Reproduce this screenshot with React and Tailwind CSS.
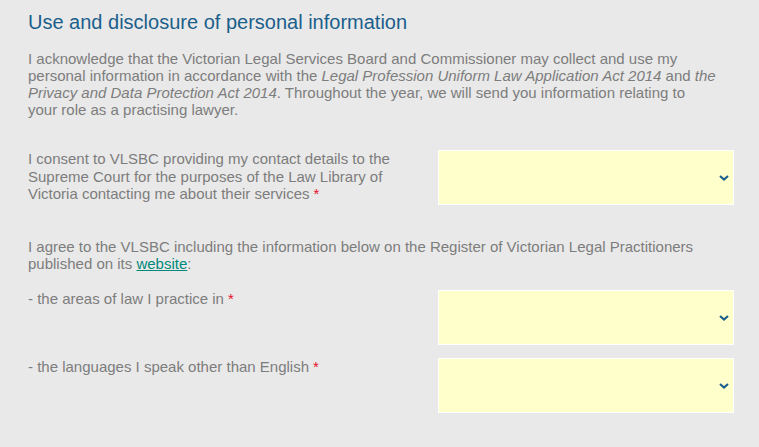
import React from 'react'

const Chevron = () => (
  <svg width="10" height="7" viewBox="0 0 10 7" className="absolute right-[4px] top-1/2 -translate-y-1/2">
    <path d="M1 1.5 L5 5 L9 1.5" fill="none" stroke="#1b5f8c" strokeWidth="2.2" />
  </svg>
)

const SelectBox = ({ height = 'h-[55px]' }) => (
  <div className={`relative ${height} w-[296px] shrink-0 border border-white bg-[#ffffcc]`}>
    <Chevron />
  </div>
)

const Req = () => <span className="ml-[4px] text-[#e8112d]">*</span>

const Row = ({ children, className = '' }) => (
  <div className={`flex items-start justify-between ${className}`}>
    <div className="w-[405px] text-[15px] leading-[17.5px] text-[#7d7d7d]">{children}</div>
    <SelectBox />
  </div>
)

export default function App() {
  return (
    <div
      className="min-h-[447px] w-[759px] bg-[#e9e9e9] pl-[28px] pr-[25px] pt-[10px]"
      style={{ fontFamily: '"Liberation Sans", Arial, sans-serif' }}
    >
      <h2 className="text-[20px] leading-[24px] text-[#1b5f8c]">Use and disclosure of personal information</h2>

      <p className="mt-[16px] text-[15px] leading-[17px] text-[#7d7d7d]">
        I acknowledge that the Victorian Legal Services Board and Commissioner may collect and use my
        <br />
        personal information in accordance with the <em>Legal Profession Uniform Law Application Act 2014</em> and{' '}
        <em>the</em>
        <br />
        <em>Privacy and Data Protection Act 2014</em>. Throughout the year, we will send you information relating to
        <br />
        your role as a practising lawyer.
      </p>

      <Row className="mt-[32px]">
        I consent to VLSBC providing my contact details to the Supreme Court for the purposes of the Law Library of
        Victoria contacting me about their services
        <Req />
      </Row>

      <p className="mt-[33px] text-[15px] leading-[17px] text-[#7d7d7d]">
        I agree to the VLSBC including the information below on the Register of Victorian Legal Practitioners
        <br />
        published on its{' '}
        <a href="#" className="text-[#00897b] underline">
          website
        </a>
        :
      </p>

      <Row className="mt-[18px]">
        - the areas of law I practice in
        <Req />
      </Row>

      <Row className="mt-[13px]">
        - the languages I speak other than English
        <Req />
      </Row>
    </div>
  )
}
